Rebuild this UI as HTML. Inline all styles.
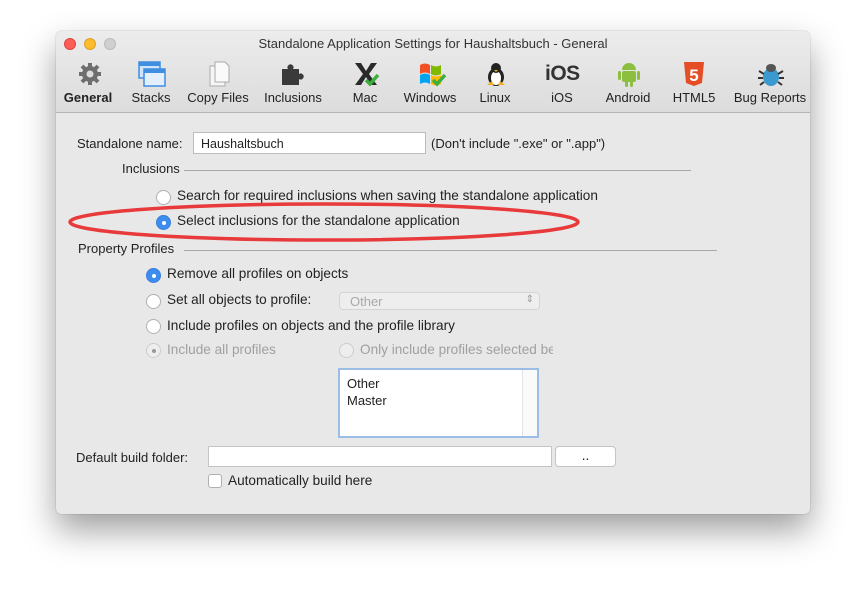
<!DOCTYPE html>
<html><head><meta charset="utf-8"><style>
*{margin:0;padding:0;box-sizing:border-box}
body{width:866px;height:594px;background:#fff;font-family:"Liberation Sans",sans-serif;font-size:13.6px;color:#222;position:relative;overflow:hidden}
.win{position:absolute;left:56px;top:31px;width:754px;height:483px;background:#e8e8e8;border-radius:5px;box-shadow:0 16px 34px rgba(0,0,0,.38),0 0 1px rgba(0,0,0,.4);overflow:hidden}
.tb{position:absolute;left:0;top:0;width:754px;height:82px;background:linear-gradient(#ececec,#dcdcdc);border-bottom:1px solid #b5b5b5}
.title{position:absolute;top:5px;width:100%;text-align:center;font-size:13px;color:#333}
.dot{position:absolute;top:7px;width:12px;height:12px;border-radius:50%}
.a{position:absolute;white-space:nowrap}
.lbl{position:absolute;top:59px;font-size:13px;color:#222;transform:translateX(-50%);white-space:nowrap}
.ic{position:absolute;top:30px}
.rad{position:absolute;width:15px;height:15px;border-radius:50%;background:#fff;border:1px solid #b0b0b0}
.rad.on{background:#3d8cf0;border-color:#3a7ed8}
.rad.on::after{content:"";position:absolute;left:4.5px;top:4.5px;width:4px;height:4px;border-radius:50%;background:#fff}
.rad.dis{background:#eee;border-color:#ccc}
.g{color:#a0a0a0}
.line{position:absolute;height:1px;background:#a8a8a8}
</style></head><body>
<div class="win">
<div class="tb">
<div class="dot" style="left:8px;background:#fc5f57;border:1px solid #e0443e"></div>
<div class="dot" style="left:28px;background:#fdbc2e;border:1px solid #dea123"></div>
<div class="dot" style="left:48px;background:#d0d0d0;border:1px solid #bbb"></div>
<div class="title">Standalone Application Settings for Haushaltsbuch - General</div>
<svg class="ic" style="left:21px" width="26" height="26" viewBox="0 0 26 26"><g fill="#6e6e6e"><circle cx="13" cy="13" r="8"/><g stroke="#6e6e6e" stroke-width="4"><line x1="13" y1="2" x2="13" y2="24"/><line x1="2" y1="13" x2="24" y2="13"/><line x1="5" y1="5" x2="21" y2="21"/><line x1="21" y1="5" x2="5" y2="21"/></g><circle cx="13" cy="13" r="3.5" fill="#ddd"/></g></svg>
<svg class="ic" style="left:82px" width="28" height="26"><rect x="1" y="1" width="21" height="16" fill="#cfe3fa" stroke="#3f8ee0" stroke-width="1.5"/><rect x="1" y="1" width="21" height="4" fill="#3f8ee0"/><rect x="6" y="8" width="21" height="17" fill="#e3effc" stroke="#3f8ee0" stroke-width="1.5"/><rect x="6" y="8" width="21" height="4" fill="#3f8ee0"/></svg>
<svg class="ic" style="left:152px" width="24" height="26"><path d="M2 5h11l4 4v16H2z" fill="#f6f6f6" stroke="#aaa"/><path d="M7 1h10l4 4v16H7z" fill="#fafafa" stroke="#aaa"/></svg>
<svg class="ic" style="left:223px" width="28" height="26"><path d="M3 8h6a3 3 0 1 1 5 0h6v5a3 3 0 1 1 0 5v6H3z" fill="#3a3a3a"/></svg>
<svg class="ic" style="left:297px" width="28" height="26"><path d="M2 2h6l5 8 5-8h6l-8 11 8 11h-6l-5-8-5 8H2l8-11z" fill="#2a2a2a"/><path d="M13 19l4 4 8-9" stroke="#3cae3c" stroke-width="3.5" fill="none"/></svg>
<svg class="ic" style="left:362px" width="30" height="26"><path d="M2 4q5-3 10 0v9q-5-3-10 0z" fill="#f25022"/><path d="M13 4q5 3 10 0v9q-5 3-10 0z" fill="#7fba00"/><path d="M2 14q5-3 10 0v9q-5-3-10 0z" fill="#00a4ef"/><path d="M13 14q5 3 10 0v9q-5 3-10 0z" fill="#ffb900"/><path d="M15 19l4 4 8-9" stroke="#3cae3c" stroke-width="3.5" fill="none"/></svg>
<svg class="ic" style="left:428px" width="24" height="26"><ellipse cx="12" cy="16" rx="8" ry="9" fill="#222"/><ellipse cx="12" cy="17" rx="5" ry="7" fill="#fff"/><circle cx="12" cy="7" r="5" fill="#222"/><path d="M3 24h7l-2-4zM21 24h-7l2-4z" fill="#f0b020"/><path d="M10 9h4l-2 2z" fill="#f0b020"/></svg>
<div class="a" style="left:489px;top:31px;font-size:21px;color:#333;font-weight:bold;letter-spacing:-0.5px">iOS</div>
<svg class="ic" style="left:561px" width="24" height="26"><path d="M5 9a7 7 0 0 1 14 0z" fill="#8cbf3f"/><rect x="5" y="10" width="14" height="11" rx="2" fill="#8cbf3f"/><rect x="1" y="10" width="3" height="9" rx="1.5" fill="#8cbf3f"/><rect x="20" y="10" width="3" height="9" rx="1.5" fill="#8cbf3f"/><rect x="8" y="20" width="3" height="6" rx="1.5" fill="#8cbf3f"/><rect x="13" y="20" width="3" height="6" rx="1.5" fill="#8cbf3f"/></svg>
<svg class="ic" style="left:626px" width="24" height="26"><path d="M2 1h20l-2 21-8 3-8-3z" fill="#e44d26"/><text x="12" y="20" font-size="17" font-weight="bold" fill="#fff" text-anchor="middle" font-family="Liberation Sans">5</text></svg>
<svg class="ic" style="left:701px" width="28" height="26"><ellipse cx="14" cy="16" rx="8" ry="9" fill="#3a9ad0"/><ellipse cx="14" cy="7" rx="5" ry="4" fill="#555"/><g stroke="#333" stroke-width="2"><line x1="2" y1="10" x2="7" y2="13"/><line x1="26" y1="10" x2="21" y2="13"/><line x1="1" y1="17" x2="6" y2="17"/><line x1="27" y1="17" x2="22" y2="17"/><line x1="3" y1="24" x2="7" y2="21"/><line x1="25" y1="24" x2="21" y2="21"/></g></svg>
<div class="lbl" style="left:32px;font-weight:bold">General</div>
<div class="lbl" style="left:95px">Stacks</div>
<div class="lbl" style="left:162px">Copy Files</div>
<div class="lbl" style="left:237px">Inclusions</div>
<div class="lbl" style="left:309px">Mac</div>
<div class="lbl" style="left:374px">Windows</div>
<div class="lbl" style="left:439px">Linux</div>
<div class="lbl" style="left:506px">iOS</div>
<div class="lbl" style="left:572px">Android</div>
<div class="lbl" style="left:638px">HTML5</div>
<div class="lbl" style="left:714px">Bug Reports</div>
</div>

<div class="a" style="left:21px;top:105px;font-size:13px">Standalone name:</div>
<div class="a" style="left:137px;top:101px;width:233px;height:22px;background:#fff;border:1px solid #bcbcbc;padding:4px 7px;font-size:12.5px">Haushaltsbuch</div>
<div class="a" style="left:375px;top:105px;font-size:13px">(Don't include ".exe" or ".app")</div>
<div class="a" style="left:66px;top:130px;font-size:13px">Inclusions</div>
<div class="line" style="left:128px;top:139px;width:507px"></div>
<div class="rad" style="left:100px;top:159px"></div>
<div class="a" style="left:121px;top:157px">Search for required inclusions when saving the standalone application</div>
<div class="rad on" style="left:100px;top:184px"></div>
<div class="a" style="left:121px;top:182px">Select inclusions for the standalone application</div>
<div class="a" style="left:22px;top:210px;font-size:13px">Property Profiles</div>
<div class="line" style="left:128px;top:219px;width:533px"></div>
<div class="rad on" style="left:90px;top:237px"></div>
<div class="a" style="left:111px;top:235px">Remove all profiles on objects</div>
<div class="rad" style="left:90px;top:263px"></div>
<div class="a" style="left:111px;top:261px">Set all objects to profile:</div>
<div class="a" style="left:283px;top:261px;width:201px;height:18px;background:#eeeeee;border:1px solid #d4d4d4;border-radius:4px;padding:1px 10px;color:#a8a8a8;font-size:13px">Other<span style="position:absolute;right:5px;top:1px;font-size:10px;color:#999">⇕</span></div>
<div class="rad" style="left:90px;top:288px"></div>
<div class="a" style="left:111px;top:287px">Include profiles on objects and the profile library</div>
<div class="rad dis" style="left:90px;top:312px"><div style="position:absolute;left:4.5px;top:4.5px;width:4px;height:4px;border-radius:50%;background:#999"></div></div>
<div class="a g" style="left:111px;top:311px">Include all profiles</div>
<div class="rad dis" style="left:283px;top:312px"></div>
<div class="a g" style="left:304px;top:311px;width:193px;overflow:hidden">Only include profiles selected below</div>
<div class="a" style="left:282px;top:337px;width:201px;height:70px;background:#fff;border:2px solid #9cbde6;padding:5px 7px;line-height:17px;font-size:13px">Other<br>Master<div style="position:absolute;right:0;top:0;width:15px;height:100%;border-left:1px solid #e4e4e4;background:#fafafa"></div></div>
<div class="a" style="left:20px;top:419px;font-size:13px">Default build folder:</div>
<div class="a" style="left:152px;top:415px;width:344px;height:21px;background:#fff;border:1px solid #c4c4c4"></div>
<div class="a" style="left:499px;top:415px;width:61px;height:21px;background:#fff;border:1px solid #c4c4c4;border-radius:4px;text-align:center;line-height:18px">..</div>
<div class="a" style="left:152px;top:443px;width:14px;height:14px;background:#fff;border:1px solid #b0b0b0;border-radius:3px"></div>
<div class="a" style="left:172px;top:442px">Automatically build here</div>
</div>
<svg style="position:absolute;left:0;top:0" width="866" height="594"><ellipse cx="324" cy="222" rx="254" ry="18" fill="none" stroke="#e8393b" stroke-width="3.5"/></svg>
</body></html>
